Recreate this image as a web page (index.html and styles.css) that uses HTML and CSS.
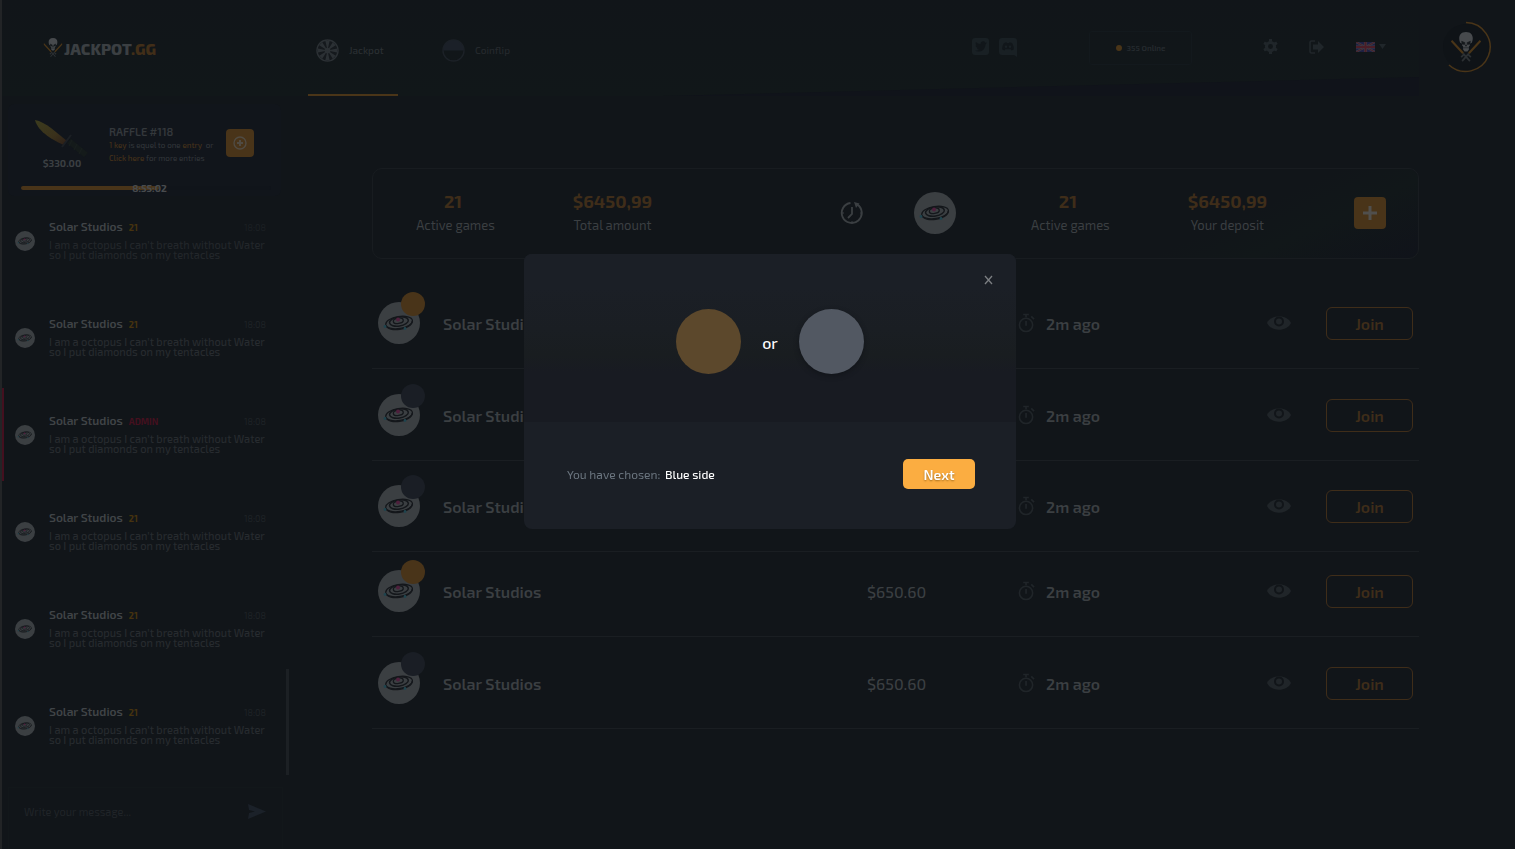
FILE: index.html
```html
<!DOCTYPE html>
<html lang="en">
<head>
<meta charset="utf-8">
<title>Jackpot.gg</title>
<link rel="stylesheet" href="styles.css">
</head>
<body>
<svg class="sprite" aria-hidden="true">
  <symbol id="planet" viewBox="0 0 42 42">
    <circle cx="21" cy="21" r="21" fill="#3b3f42"/>
    <g transform="rotate(-9 21 20)" fill="none" stroke="#14171b">
      <ellipse cx="21" cy="20.500" rx="13.500" ry="6" stroke-width="1.200"/>
      <path d="M7.500 21c1 8.500 25 8.500 27 0" stroke-width="1.200"/>
      <ellipse cx="21" cy="19.500" rx="9.500" ry="4.500" stroke-width="1.500"/>
      <ellipse cx="20.500" cy="18.700" rx="5" ry="2.700" stroke-width="1.300"/>
    </g>
    <circle cx="20" cy="17.500" r="2" fill="#4e1f3c"/>
    <circle cx="7" cy="24.500" r="1.400" fill="#1f444e"/>
    <circle cx="27" cy="26.500" r="1.400" fill="#1f444e"/>
  </symbol>
  <symbol id="pirate" viewBox="0 0 30 32">
    <path d="M0 9l12 13M30 9L18 22" stroke="#4a3518" stroke-width="2.300" fill="none"/>
    <path d="M12 22l7 8M18 22l-7 8M10 26l3-3M20 26l-3-3" stroke="#2c3033" stroke-width="1.800" fill="none"/>
    <path d="M15 0c-5 0-7 3-7 6.500 0 2 .5 3.500 1 4.500l2 1v2l1 1v3l1.500 2h3l1.500-2v-3l1-1v-2l2-1c.5-1 1-2.500 1-4.500C22 3 20 0 15 0z" fill="#474a4d"/>
    <path d="M10.500 9.500l3.500 1.500-.5 2-2.500-.5zM19.500 9.500L16 11l.5 2 2.500-.5zM14.300 14.500l.7-1.500.7 1.500zM12 16.300h6" fill="#14181b" stroke="#14181b" stroke-width=".6"/>
  </symbol>
  <symbol id="stopwatch" viewBox="0 0 18 20">
    <circle cx="8.500" cy="12" r="7" fill="none" stroke="#202529" stroke-width="1.700"/>
    <path d="M5.500 1h6M8.500 1v3M8.500 8v5M14 3l3 3" fill="none" stroke="#202529" stroke-width="1.800"/>
  </symbol>
  <symbol id="eye" viewBox="0 0 24 14">
    <path d="M0 7c4-9 20-9 24 0-4 9-20 9-24 0z" fill="#202529"/>
    <circle cx="12" cy="5.500" r="5" fill="#111519"/>
    <circle cx="12" cy="5.500" r="3" fill="#202529"/>
  </symbol>
</svg>

<div class="page">
  <header class="topbar">
    <a class="logo" href="#">
      <svg width="20" height="20" viewBox="0 0 30 32" aria-hidden="true"><use href="#pirate"/></svg>
      <span>JACKPOT<b>.GG</b></span>
    </a>
    <nav class="tabs">
      <a class="tab tab-active" href="#">
        <svg width="23" height="23" viewBox="0 0 24 24" aria-hidden="true">
          <circle cx="12" cy="12" r="11" fill="#15191d" stroke="#2b3034" stroke-width="1.500"/>
          <path d="M12 12L9.800 2h4.400zM12 12L9.800 22h4.400zM12 12L2 9.800v4.400zM12 12l10-2.200v4.400zM12 12L3.400 6.500l3.100-3.100zM12 12l8.600 5.500-3.100 3.100zM12 12l5.500-8.600 3.100 3.100zM12 12l-5.500 8.600-3.100-3.100z" fill="#2b3034"/>
          <circle cx="12" cy="12" r="3" fill="#2b3034"/>
        </svg>
        <span>Jackpot</span>
      </a>
      <a class="tab" href="#">
        <svg width="23" height="23" viewBox="0 0 24 24" aria-hidden="true">
          <circle cx="12" cy="12" r="11" fill="none" stroke="#1c2127" stroke-width="1.500"/>
          <path d="M1 12a11 11 0 0 1 22 0z" fill="#1b2028"/>
        </svg>
        <span>Coinflip</span>
      </a>
    </nav>
    <div class="tools">
      <div class="social">
        <a href="#" aria-label="Twitter"><svg width="18" height="20" viewBox="0 0 18 20"><rect y="1" width="17" height="17" rx="3" fill="#192024"/><path d="M3 13.500c3 2 10 1.500 10.500-6l1.500-2-1.500.2c-1-2-5-2-5 1.300-2 0-3.500-1-4.500-2-.8 1.500-.2 2.700.6 3.500l-1-.3c0 1.500 1 2.300 2 2.800H5c.4 1 1 1.500 2 1.700-1 .7-2.500.8-4 .8z" fill="#11161a"/></svg></a>
        <a href="#" aria-label="Discord"><svg width="18" height="20" viewBox="0 0 18 20"><path d="M3 1h12a3 3 0 0 1 3 3v16l-3-2H3a3 3 0 0 1-3-3V4a3 3 0 0 1 3-3z" fill="#192024"/><path d="M5 6l2.500-.8.5.8h2l.5-.8L13 6c1.300 2 2 4 1.800 6.500l-2.300 1-.8-1.200H6.300l-.8 1.200-2.300-1C3 10 3.700 8 5 6z" fill="#11161a"/><circle cx="7" cy="9.700" r="1.200" fill="#192024"/><circle cx="11" cy="9.700" r="1.200" fill="#192024"/></svg></a>
      </div>
      <div class="online"><i class="dot"></i>355 Online</div>
      <button class="icon-btn gear" aria-label="Settings"><svg width="15" height="15" viewBox="0 0 16 16"><circle cx="8" cy="8" r="4.300" fill="none" stroke="#20262a" stroke-width="3.400"/><path d="M8 0v3M8 13v3M1.100 4l2.600 1.500M12.300 10.500l2.600 1.500M1.100 12l2.600-1.500M12.300 5.500L14.900 4" stroke="#20262a" stroke-width="3.200"/></svg></button>
      <button class="icon-btn exit" aria-label="Log out"><svg width="15" height="14" viewBox="0 0 15 14"><path d="M6 1H2.500C1.500 1 1 1.600 1 2.500v9c0 1 .5 1.500 1.500 1.500H6" fill="none" stroke="#20262a" stroke-width="1.600"/><path d="M4 4.500h5V1l6 6-6 6V9.500H4z" fill="#20262a"/></svg></button>
      <button class="icon-btn lang" aria-label="Language: English">
        <svg width="19" height="10" viewBox="0 0 19 10"><path fill="#1d1f42" d="M0 0h19v10H0z"/><path d="M0 0l19 10M19 0L0 10" stroke="#3c3f48" stroke-width="2"/><path d="M0 0l19 10M19 0L0 10" stroke="#4a1d27" stroke-width="1"/><path d="M9.500 0v10M0 5h19" stroke="#3c3f48" stroke-width="3.200"/><path d="M9.500 0v10M0 5h19" stroke="#4a1d27" stroke-width="2"/></svg>
        <svg width="7" height="5" viewBox="0 0 7 5"><path d="M0 0h7L3.500 5z" fill="#20262a"/></svg>
      </button>
    </div>
    <a class="profile" href="#" aria-label="Profile">
      <svg width="52" height="52" viewBox="0 0 52 52">
        <circle cx="26" cy="26" r="23" fill="#0f1317"/>
        <path d="M26 1.500A24.500 24.500 0 1 1 9 44" fill="none" stroke="#4a3518" stroke-width="1.500"/>
        <use href="#pirate" x="11" y="11" width="30" height="31"/>
      </svg>
    </a>
  </header>

  <aside class="sidebar">
    <section class="raffle">
      <div class="raffle-body">
        <div class="prize">
          <svg width="54" height="38" viewBox="0 0 54 38" aria-hidden="true">
            <defs><linearGradient id="blade" x2="1" y2="1"><stop stop-color="#3c3c1e"/><stop offset=".6" stop-color="#3a311b"/><stop offset="1" stop-color="#2c1e18"/></linearGradient></defs>
            <path d="M0 0c5 1 11 4 16 8l16 13-3 4C19 21 3 12 0 0z" fill="url(#blade)"/>
            <path d="M36 15l-9 12" stroke="#1b1f24" stroke-width="2"/>
            <path d="M34 21l17 14" stroke="#141a1a" stroke-width="6"/>
            <path d="M37 20l-3 6M42 24l-3 6M47 28l-3 6" stroke="#191f1e" stroke-width="1"/>
          </svg>
          <strong>$330.00</strong>
        </div>
        <div class="raffle-text">
          <h2>RAFFLE #118</h2>
          <p><b>1 key</b> is equel to one <b>entry</b>&nbsp; or<br><a href="#">Click here</a> for more entries</p>
        </div>
        <button class="gold-btn raffle-add" aria-label="Add entry"><svg width="14" height="14" viewBox="0 0 14 14"><circle cx="7" cy="7" r="6" fill="none" stroke="#504b43" stroke-width="1.400"/><path d="M7 4v6M4 7h6" stroke="#504b43" stroke-width="2"/></svg></button>
      </div>
      <div class="progress"><span class="progress-fill"></span><span class="progress-time">8:55:02</span></div>
    </section>

    <ul class="chat">
      <li class="msg msg-faded"><svg class="msg-pic"><use href="#planet"/></svg><div class="msg-main"><div class="msg-head"><strong>Solar Studios</strong><em>21</em><time>18:08</time></div><p>I am a octopus I can’t breath without Water so I put diamonds on my tentacles</p></div></li>
      <li class="msg"><svg class="msg-pic"><use href="#planet"/></svg><div class="msg-main"><div class="msg-head"><strong>Solar Studios</strong><em>21</em><time>18:08</time></div><p>I am a octopus I can’t breath without Water so I put diamonds on my tentacles</p></div></li>
      <li class="msg msg-admin"><svg class="msg-pic"><use href="#planet"/></svg><div class="msg-main"><div class="msg-head"><strong>Solar Studios</strong><em>ADMIN</em><time>18:08</time></div><p>I am a octopus I can’t breath without Water so I put diamonds on my tentacles</p></div></li>
      <li class="msg"><svg class="msg-pic"><use href="#planet"/></svg><div class="msg-main"><div class="msg-head"><strong>Solar Studios</strong><em>21</em><time>18:08</time></div><p>I am a octopus I can’t breath without Water so I put diamonds on my tentacles</p></div></li>
      <li class="msg"><svg class="msg-pic"><use href="#planet"/></svg><div class="msg-main"><div class="msg-head"><strong>Solar Studios</strong><em>21</em><time>18:08</time></div><p>I am a octopus I can’t breath without Water so I put diamonds on my tentacles</p></div></li>
      <li class="msg"><svg class="msg-pic"><use href="#planet"/></svg><div class="msg-main"><div class="msg-head"><strong>Solar Studios</strong><em>21</em><time>18:08</time></div><p>I am a octopus I can’t breath without Water so I put diamonds on my tentacles</p></div></li>
    </ul>
    <span class="scroll-thumb"></span>
    <form class="composer">
      <input type="text" placeholder="Write your message..." aria-label="Write your message">
      <button class="icon-btn" type="button" aria-label="Send"><svg width="18" height="15" viewBox="0 0 18 15"><path d="M0 0l18 7.500L0 15l1-6 6-1.500L1 6z" fill="#1b2129"/></svg></button>
    </form>
  </aside>

  <main class="content">
    <section class="stats">
      <div class="stats-half">
        <div class="stat stat-count"><strong>21</strong><span>Active games</span></div>
        <div class="stat"><strong>$6450,99</strong><span>Total amount</span></div>
        <button class="icon-btn history" aria-label="History"><svg width="24" height="24" viewBox="0 0 24 24"><path d="M10.500 2A10 10 0 1 0 17 3.400" fill="none" stroke="#3b3f42" stroke-width="1.900"/><path d="M14 1l5.500 1.500L16 7z" fill="#3b3f42"/><path d="M12 6v7l-4 4" fill="none" stroke="#3b3f42" stroke-width="1.800"/><path d="M12 20v2M2 12h2M20 12h2" stroke="#3b3f42" stroke-width="1"/></svg></button>
      </div>
      <div class="stats-half stats-own">
        <svg class="own-pic"><use href="#planet"/></svg>
        <div class="stat stat-count"><strong>21</strong><span>Active games</span></div>
        <div class="stat"><strong>$6450,99</strong><span>Your deposit</span></div>
        <button class="gold-btn deposit" aria-label="Deposit"><svg width="16" height="16" viewBox="0 0 16 16"><path d="M8 1v14M1 8h14" stroke="#504f4d" stroke-width="3"/></svg></button>
      </div>
    </section>

    <ul class="games">
      <li class="game"><div class="player"><svg><use href="#planet"/></svg><i class="side side-gold"></i></div><strong>Solar Studios</strong><span class="amount">$650.60</span><span class="ago"><svg><use href="#stopwatch"/></svg>2m ago</span><button class="icon-btn eye" aria-label="Watch"><svg><use href="#eye"/></svg></button><button class="join">Join</button></li>
      <li class="game"><div class="player"><svg><use href="#planet"/></svg><i class="side"></i></div><strong>Solar Studios</strong><span class="amount">$650.60</span><span class="ago"><svg><use href="#stopwatch"/></svg>2m ago</span><button class="icon-btn eye" aria-label="Watch"><svg><use href="#eye"/></svg></button><button class="join">Join</button></li>
      <li class="game game-snug"><div class="player"><svg><use href="#planet"/></svg><i class="side"></i></div><strong>Solar Studios</strong><span class="amount">$650.60</span><span class="ago"><svg><use href="#stopwatch"/></svg>2m ago</span><button class="icon-btn eye" aria-label="Watch"><svg><use href="#eye"/></svg></button><button class="join">Join</button></li>
      <li class="game game-tight"><div class="player"><svg><use href="#planet"/></svg><i class="side side-gold"></i></div><strong>Solar Studios</strong><span class="amount">$650.60</span><span class="ago"><svg><use href="#stopwatch"/></svg>2m ago</span><button class="icon-btn eye" aria-label="Watch"><svg><use href="#eye"/></svg></button><button class="join">Join</button></li>
      <li class="game"><div class="player"><svg><use href="#planet"/></svg><i class="side"></i></div><strong>Solar Studios</strong><span class="amount">$650.60</span><span class="ago"><svg><use href="#stopwatch"/></svg>2m ago</span><button class="icon-btn eye" aria-label="Watch"><svg><use href="#eye"/></svg></button><button class="join">Join</button></li>
    </ul>
  </main>
</div>

<div class="overlay">
  <div class="modal" role="dialog" aria-modal="true" aria-label="Choose a side">
    <div class="modal-top">
      <button class="close" aria-label="Close"><svg width="9" height="10" viewBox="0 0 9 10"><path d="M1 1l7 8M8 1L1 9" stroke="#7c7f82" stroke-width="1.300"/></svg></button>
      <div class="choices">
        <button class="coin coin-gold" aria-label="Gold side"></button>
        <span>or</span>
        <button class="coin coin-blue" aria-label="Blue side"></button>
      </div>
    </div>
    <div class="modal-foot">
      <p>You have chosen: <b>Blue side</b></p>
      <button class="next">Next</button>
    </div>
  </div>
</div>
</body>
</html>
```

FILE: styles.css
```css
* { box-sizing: border-box; }

body {
  margin: 0;
  background: #111519;
  color: #3b3f42;
  font-family: "Exo 2", Roboto, "Open Sans", sans-serif;
  font-size: 12px;
}

h2, p, ul { margin: 0; padding: 0; }
ul { list-style: none; }
a { color: inherit; text-decoration: none; }
svg { display: block; flex: none; }
button { font: inherit; cursor: pointer; border: 0; padding: 0; }
.sprite { position: absolute; width: 0; height: 0; }
.icon-btn { background: none; display: flex; align-items: center; }

.page {
  min-height: 100vh;
  border-left: 2px solid #222426;
  display: grid;
  grid-template-columns: 288px minmax(0, 1fr);
  grid-template-rows: 96px 1fr;
}

/* Top bar */
.topbar {
  grid-column: 1 / -1;
  display: flex;
  align-items: center;
  padding-right: 23px;
  background: linear-gradient(#111519, #111719);
  background-size: calc(100% - 96px) 100%;
  background-repeat: no-repeat;
  position: relative;
}
.topbar::after {
  content: "";
  position: absolute;
  right: 96px;
  bottom: 0;
  width: 50%;
  height: 19px;
  background: #10131a;
  clip-path: polygon(0 100%, 100% 0, 100% 100%);
}
.logo {
  display: flex;
  align-items: center;
  gap: 1px;
  width: 306px;
  padding-left: 41px;
  font-size: 16px;
  font-weight: 800;
}
.logo b { color: #412e18; font-weight: 800; }
.tabs { display: flex; gap: 36px; align-self: stretch; }
.tab {
  display: flex;
  align-items: center;
  gap: 10px;
  width: 90px;
  padding: 6px 8px 0;
  border-bottom: 2px solid transparent;
  font-size: 10px;
  font-weight: 500;
  color: #25292d;
}
.tab-active { border-color: #4a3518; color: #2b3033; }
.tools { display: flex; align-items: center; margin-left: auto; padding-bottom: 3px; }
.social { display: flex; gap: 9px; margin-right: 72px; }
.online {
  display: flex;
  align-items: center;
  justify-content: center;
  gap: 5px;
  width: 103px;
  height: 34px;
  margin-top: 3px;
  border: 1px solid #13191d;
  border-radius: 3px;
  font-size: 8px;
  font-weight: 600;
  color: #262b2f;
}
.dot { width: 6px; height: 6px; border-radius: 50%; background: #4a3518; }
.gear { margin-left: 71px; }
.exit { margin-left: 31px; }
.lang { margin-left: 32px; gap: 4px; }
.profile { margin-left: 54px; padding-bottom: 3px; }

/* Sidebar */
.sidebar {
  position: relative;
  display: flex;
  flex-direction: column;
  padding: 8px 0 0;
}
.raffle {
  height: 92px;
  margin: 0 9px 0 6px;
  padding: 14px 10px 0 13px;
  border-radius: 6px;
  background: #11151b;
}
.raffle-body { display: flex; height: 62px; }
.prize { display: flex; flex-direction: column; align-items: center; width: 88px; padding: 2px 6px 0 0; }
.prize strong { font-size: 10px; line-height: 12px; margin-top: -1px; }
.raffle-text { flex: 1; padding-top: 7px; font-size: 8px; line-height: 13px; white-space: nowrap; color: #34383b; }
.raffle-text h2 { font-size: 11px; line-height: 14px; font-weight: 600; color: #34383b; }
.raffle-text p b, .raffle-text a { font-weight: 500; color: #46321a; }
.gold-btn {
  display: flex;
  align-items: center;
  justify-content: center;
  background: #493419;
  border-radius: 4px;
}
.raffle-add { width: 28px; height: 28px; margin: 11px 17px 0 0; }
.progress { position: relative; height: 4px; margin-top: 6px; border-radius: 2px; background: #10141a; }
.progress-fill { display: block; width: 55%; height: 4px; border-radius: 2px; background: #493419; }
.progress-time {
  position: absolute;
  top: -4px;
  left: 0;
  right: 0;
  padding-left: 7px;
  text-align: center;
  font-size: 10px;
  line-height: 12px;
  font-weight: 700;
  color: #484b4e;
}

.msg {
  display: flex;
  gap: 14px;
  height: 97px;
  padding: 23px 24px 0 13px;
  position: relative;
}
.chat { margin-top: -3px; }
.msg-pic { width: 20px; height: 20px; margin-top: 15px; }
.msg-main { flex: 1; min-width: 0; }
.msg-head { display: flex; align-items: baseline; line-height: 20px; margin-bottom: 2px; }
.msg-head strong { font-weight: 600; color: #404447; }
.msg-head em { margin-left: 6px; font-size: 9px; font-style: normal; font-weight: 700; color: #46330f; }
.msg-head time { margin-left: auto; font-size: 9px; color: #1f2327; }
.msg p { font-size: 11px; line-height: 10px; font-weight: 500; color: #272b2f; margin-right: -6px; }
.msg-faded p, .msg-faded time { opacity: .8; }
.msg-admin::before {
  content: "";
  position: absolute;
  left: 0;
  top: 1px;
  width: 2px;
  height: 93px;
  background: #44101f;
}
.msg-admin em { color: #44101f; }
.scroll-thumb { position: absolute; right: 1px; bottom: 74px; width: 3px; height: 106px; background: #1c2024; }
.composer {
  display: flex;
  align-items: center;
  flex: 1;
  margin: 12px 7px 0 6px;
  padding: 0 16px 14px 15px;
  border: 1px solid #12171a;
  border-bottom: 0;
}
.composer input {
  flex: 1;
  min-width: 0;
  padding: 0;
  border: 0;
  outline: 0;
  background: none;
  font: inherit;
  font-size: 11px;
  color: #3b3f42;
}
.composer input::placeholder { color: #202428; opacity: 1; }

/* Main */
.content { padding: 72px 96px 40px 82px; }
.stats {
  display: grid;
  grid-template-columns: 562fr 485fr;
  height: 91px;
  border: 1px solid #181c20;
  border-radius: 10px;
}
.stats-half { display: flex; align-items: center; padding: 0 0 1px 28px; }
.stats-own {
  padding: 0 32px 1px 0;
  border-radius: 0 10px 10px 0;
  background: linear-gradient(155deg, #111519 60%, #111719 75%, #10131a);
}
.own-pic { width: 42px; height: 42px; margin: 0 60px 0 -20px; }
.stat { width: 109px; text-align: center; margin-right: 48px; line-height: 24px; font-size: 13px; }
.stat strong { display: block; font-size: 18px; color: #3f2d19; }
.stat-count strong { padding-right: 5px; }
.history { margin: 0 70px 0 auto; }
.deposit { width: 32px; height: 32px; margin-left: auto; }

.games { margin-top: 18px; }
.game {
  display: grid;
  grid-template-columns: 65px minmax(0, 1fr) 151px 249px 59px 87px;
  align-items: center;
  padding: 25px 6px 24px;
  border-bottom: 1px solid #1a1e22;
  font-size: 16px;
}
.game-snug { padding-top: 24px; }
.game-tight { padding-top: 18px; }
.game strong, .ago { font-weight: 600; }
.amount { font-weight: 500; }
.player { position: relative; width: 42px; height: 42px; }
.player svg { width: 42px; height: 42px; }
.side {
  position: absolute;
  right: -5px;
  top: -10px;
  width: 24px;
  height: 24px;
  border-radius: 50%;
  background: #1a1e25;
}
.side-gold { background: #493419; }
.ago { display: flex; align-items: center; gap: 11px; }
.ago svg { width: 17px; height: 20px; }
.eye svg { width: 24px; height: 14px; }
.join {
  height: 33px;
  background: none;
  border: 1px solid #3f2d19;
  border-radius: 6px;
  color: #3f2d19;
  font-weight: 600;
}

/* Side picker */
.overlay {
  position: fixed;
  inset: 0;
  display: flex;
  align-items: center;
  justify-content: center;
  padding: 0 0 66px 25px;
}
.modal { width: 492px; border-radius: 8px; background: #1b1f26; overflow: hidden; }
.modal-top {
  position: relative;
  height: 168px;
  padding-top: 55px;
  background: linear-gradient(#1b1f26 20%, #1a1e23 45%, #191d20 60%, #181b22 70%, #181b22);
}
.close { position: absolute; right: 23px; top: 21px; background: none; }
.choices { display: flex; align-items: center; justify-content: center; gap: 21px; font-size: 16px; font-weight: 500; color: #fff; }
.choices span { padding-top: 2px; }
.coin { width: 65px; height: 65px; border-radius: 50%; }
.coin-gold { background: #5c482c; }
.coin-blue { background: #525862; box-shadow: 0 2px 5px #12151a; }
.modal-foot {
  display: flex;
  align-items: center;
  justify-content: space-between;
  padding: 37px 41px 40px 43px;
  color: #6b757f;
}
.modal-foot b { margin-left: 2px; font-weight: 500; color: #fff; }
.next {
  width: 72px;
  height: 30px;
  border-radius: 5px;
  background: #fbad41;
  color: #fff;
  font-size: 14px;
  font-weight: 600;
  text-shadow: 0 1px 2px #a06a1c;
}
```
